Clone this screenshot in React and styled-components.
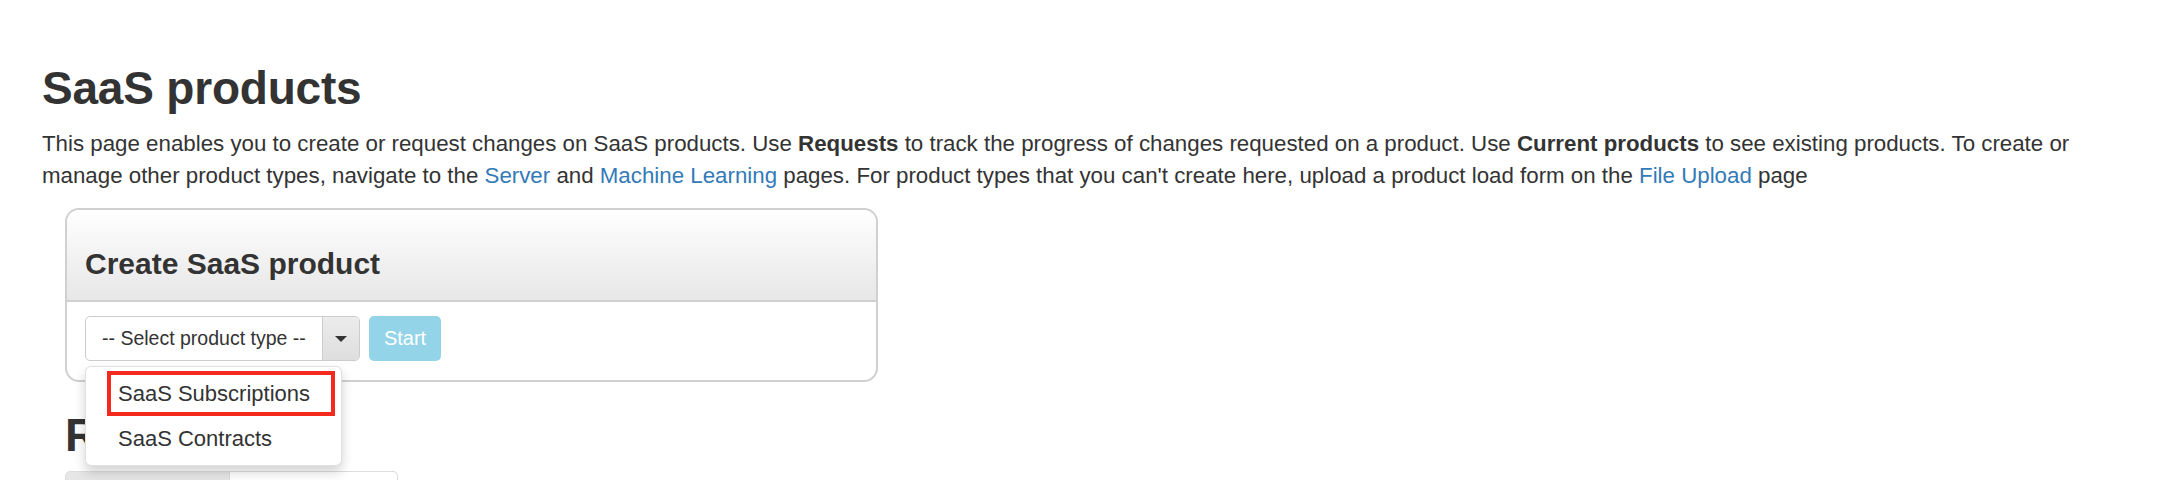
import React from 'react';
import styled, { createGlobalStyle } from 'styled-components';

const GlobalStyle = createGlobalStyle`
  html, body {
    margin: 0;
    padding: 0;
    background: #fff;
  }
  body {
    font-family: "Liberation Sans", Arial, Helvetica, sans-serif;
    color: #333;
  }
`;

const Page = styled.div`
  padding: 63px 42px 0 42px;
  height: 480px;
  box-sizing: border-box;
  overflow: hidden;
`;

const Title = styled.h1`
  margin: 0;
  font-size: 46px;
  line-height: 50px;
  font-weight: 700;
  color: #333;
  letter-spacing: -0.2px;
`;

const Intro = styled.p`
  margin: 15px 0 0 0;
  font-size: 22.3px;
  line-height: 32px;
  color: #333;

  b {
    font-weight: 700;
  }
`;

const Link = styled.a`
  color: #337ab7;
  text-decoration: none;
`;

const Section = styled.div`
  margin: 16px 0 0 23px;
`;

const Panel = styled.div`
  width: 813px;
  box-sizing: border-box;
  border: 2px solid #d0d0d0;
  border-radius: 14px;
`;

const PanelHeader = styled.div`
  padding: 37px 20px 20px 18px;
  background: linear-gradient(to bottom, #ffffff 0%, #f6f6f6 35%, #e7e7e7 100%);
  border-bottom: 2px solid #d0d0d0;
  border-radius: 12px 12px 0 0;
`;

const PanelTitle = styled.h3`
  margin: 0;
  font-size: 30px;
  line-height: 33px;
  font-weight: 700;
  color: #333;
`;

const PanelBody = styled.div`
  display: flex;
  align-items: center;
  gap: 9px;
  padding: 14px 18px 19px 18px;
`;

const SelectWrap = styled.div`
  position: relative;
`;

const Select = styled.div`
  display: flex;
  width: 275px;
  height: 45px;
  box-sizing: border-box;
  border: 1px solid #ccc;
  border-radius: 5px;
  overflow: hidden;
  background: #fff;
`;

const SelectText = styled.span`
  flex: 1;
  display: flex;
  align-items: center;
  padding-left: 16px;
  font-size: 19.5px;
  color: #333;
  white-space: nowrap;
`;

const CaretBox = styled.span`
  width: 36px;
  display: flex;
  align-items: center;
  justify-content: center;
  border-left: 1px solid #ccc;
  background: linear-gradient(to bottom, #ececec, #dedede);

  &::after {
    content: '';
    border-left: 6px solid transparent;
    border-right: 6px solid transparent;
    border-top: 6px solid #333;
  }
`;

const StartButton = styled.button`
  width: 72px;
  height: 45px;
  border: none;
  border-radius: 5px;
  background: #93d4e8;
  color: #fff;
  font-family: inherit;
  font-size: 20px;
  padding: 0;
`;

const Menu = styled.ul`
  position: absolute;
  left: 0;
  top: 50px;
  width: 257px;
  margin: 0;
  padding: 4px 0 4px 0;
  list-style: none;
  box-sizing: border-box;
  background: #fff;
  border: 1px solid rgba(0, 0, 0, 0.12);
  border-radius: 6px;
  box-shadow: 0 6px 12px rgba(0, 0, 0, 0.18);
  z-index: 10;
`;

const MenuItem = styled.li`
  margin: 0 6px 0 21px;
  height: 45px;
  display: flex;
  align-items: center;
  padding-left: 7px;
  box-sizing: border-box;
  font-size: 22px;
  color: #333;
  border: 4px solid ${p => (p.$marked ? '#f52a1f' : 'transparent')};
`;

const SubTitle = styled.h2`
  margin: 28px 0 0 0;
  font-size: 46px;
  line-height: 50px;
  font-weight: 700;
  color: #333;
`;

const Tabs = styled.div`
  display: flex;
  margin-top: 11px;
`;

const Tab = styled.div`
  width: ${p => p.$w}px;
  height: 40px;
  box-sizing: border-box;
  border: 1px solid #ddd;
  border-left: ${p => (p.$first ? '1px solid #ddd' : 'none')};
  border-radius: ${p => (p.$first ? '5px 0 0 0' : '0 5px 0 0')};
  background: ${p => (p.$active ? '#e6e6e6' : '#fff')};
`;

export default function App() {
  return (
    <Page>
      <GlobalStyle />
      <Title>SaaS products</Title>
      <Intro>
        This page enables you to create or request changes on SaaS products. Use <b>Requests</b> to track the
        progress of changes requested on a product. Use <b>Current products</b> to see existing products. To
        create or manage other product types, navigate to the <Link href="#">Server</Link> and{' '}
        <Link href="#">Machine Learning</Link> pages. For product types that you can't create here, upload a
        product load form on the <Link href="#">File Upload</Link> page
      </Intro>
      <Section>
        <Panel>
          <PanelHeader>
            <PanelTitle>Create SaaS product</PanelTitle>
          </PanelHeader>
          <PanelBody>
            <SelectWrap>
              <Select>
                <SelectText>-- Select product type --</SelectText>
                <CaretBox />
              </Select>
              <Menu>
                <MenuItem $marked>SaaS Subscriptions</MenuItem>
                <MenuItem>SaaS Contracts</MenuItem>
              </Menu>
            </SelectWrap>
            <StartButton disabled>Start</StartButton>
          </PanelBody>
        </Panel>
        <SubTitle>Requests</SubTitle>
        <Tabs>
          <Tab $first $active $w={165} />
          <Tab $w={168} />
        </Tabs>
      </Section>
    </Page>
  );
}
